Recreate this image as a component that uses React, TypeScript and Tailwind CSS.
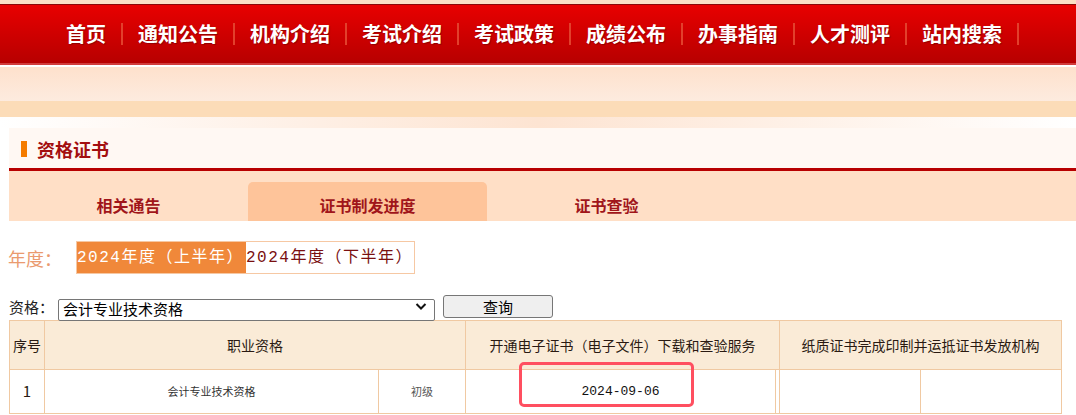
import React from 'react';

// Navigation items
const navItems = ['首页', '通知公告', '机构介绍', '考试介绍', '考试政策', '成绩公布', '办事指南', '人才测评', '站内搜索'];

const tabs = [
  { label: '相关通告', active: false },
  { label: '证书制发进度', active: true },
  { label: '证书查验', active: false },
];

const NavBar: React.FC = () => (
  <nav className="h-[61px] border-t border-[#8a0808] bg-gradient-to-b from-[#e80000] to-[#b70000] border-b-2 border-b-[#d23c3c] flex items-center pl-[66px]">
    {navItems.map((item) => (
      <div key={item} className="flex items-center">
        <span className="text-white text-[20px] font-bold leading-none [text-shadow:1px_1px_1px_rgba(110,0,0,0.6)]">{item}</span>
        <span className="ml-[15px] mr-[15px] w-[2px] h-[22px] bg-[#e2402c]" />
      </div>
    ))}
  </nav>
);

const App: React.FC = () => {
  return (
    <div className="relative w-[1076px] h-[415px] overflow-hidden bg-white font-['Noto_Sans_CJK_SC',sans-serif]">
      {/* Top strip + nav */}
      <div className="h-[4px] bg-[#fbdfc6]" />
      <NavBar />
      <div className="h-[2px] bg-white" />

      {/* Banner bands */}
      <div className="h-[34px] bg-gradient-to-b from-[#fee1cc] to-[#fdebdf]" />
      <div className="h-[16px] bg-[#fcdcb8]" />
      <div className="h-[11px] bg-gradient-to-r from-white via-[#fde4d2] to-white" />

      {/* Panel */}
      <div className="ml-[9px]">
        <div className="h-[39px] bg-[#fff8f3] border-b-[3px] border-[#b80000] box-content flex items-center pl-[12px] pt-[1px]">
          <span className="w-[6px] h-[16px] bg-[#f57c00]" />
          <span className="ml-[10px] text-[18px] font-bold text-[#a30f10] leading-none">资格证书</span>
        </div>

        <div className="h-[50px] bg-[#ffdfc6] flex items-end">
          {tabs.map((tab) => (
            <div
              key={tab.label}
              className={`w-[239px] h-[39px] flex items-end justify-center pb-[4px] rounded-t-[5px] ${tab.active ? 'bg-[#fec49a]' : ''}`}
            >
              <span className="text-[16px] leading-[24px] font-bold text-[#a0151a]">{tab.label}</span>
            </div>
          ))}
        </div>
      </div>

      {/* Year selector */}
      <div className="mt-[20px] flex items-center h-[33px]">
        <span className="w-[76px] shrink-0 pl-[8px] text-[18px] text-[#ea9a6f] leading-none whitespace-nowrap">年度：</span>
        <div className="flex border border-[#f6c8a3] font-['Liberation_Mono','Noto_Sans_CJK_SC',monospace] text-[16px] tracking-[1.5px]">
          <div className="w-[169px] h-[31px] bg-[#f0883a] text-white flex items-center whitespace-nowrap">2024年度（上半年）</div>
          <div className="w-[168px] h-[31px] bg-white text-[#7a1010] flex items-center whitespace-nowrap">2024年度（下半年）</div>
        </div>
      </div>

      {/* Qualification filter */}
      <div className="mt-[21px] flex items-center h-[23px]">
        <span className="w-[58px] shrink-0 pl-[9px] text-[15px] text-[#222] leading-none whitespace-nowrap">资格：</span>
        <div className="relative shrink-0 w-[377px] h-[22px]">
          <select className="appearance-none w-full h-full border border-[#767676] rounded-[2px] bg-white text-[15px] leading-[18px] pl-[4px] pb-[2px] text-black">
            <option>会计专业技术资格</option>
          </select>
          <svg className="absolute right-[8px] top-[6px] pointer-events-none" width="12" height="9" viewBox="0 0 12 9">
            <path d="M1.5 2 L6 6.5 L10.5 2" fill="none" stroke="#111" strokeWidth="2" />
          </svg>
        </div>
        <button className="ml-[8px] shrink-0 w-[110px] h-[23px] bg-[#efefef] border border-[#767676] rounded-[3px] text-[15px] leading-none text-black">查询</button>
      </div>

      {/* Result table */}
      <table className="mt-[2px] ml-[9px] w-[1052px] table-fixed border-collapse text-[#2a1a12]">
        <colgroup>
          <col className="w-[35px]" />
          <col className="w-[334px]" />
          <col className="w-[87px]" />
          <col className="w-[310px]" />
          <col className="w-[4px]" />
          <col className="w-[141px]" />
          <col className="w-[141px]" />
        </colgroup>
        <thead>
          <tr className="h-[49px] bg-[#faebd7] text-[14px]">
            <th className="border border-[#f0c9a2] font-normal">序号</th>
            <th colSpan={2} className="border border-[#f0c9a2] font-normal">职业资格</th>
            <th colSpan={2} className="border border-[#f0c9a2] font-normal whitespace-nowrap">开通电子证书（电子文件）下载和查验服务</th>
            <th colSpan={2} className="border border-[#f0c9a2] font-normal whitespace-nowrap">纸质证书完成印制并运抵证书发放机构</th>
          </tr>
        </thead>
        <tbody>
          <tr className="h-[44px] text-center">
            <td className="border border-[#f0c9a2] text-[15px]">1</td>
            <td className="border border-[#f0c9a2] text-[11px] text-[#333]">会计专业技术资格</td>
            <td className="border border-[#f0c9a2] text-[11px] text-[#555]">初级</td>
            <td className="border border-[#f0c9a2] text-[13px] font-['Liberation_Mono',monospace] text-[#111]">2024-09-06</td>
            <td className="border border-[#f0c9a2]" />
            <td className="border border-[#f0c9a2]" />
            <td className="border border-[#f0c9a2]" />
          </tr>
        </tbody>
      </table>

      {/* Highlight annotation */}
      <div className="absolute left-[519px] top-[362px] w-[175px] h-[45px] border-[3px] border-[#ff4f60] rounded-[5px] pointer-events-none" />
    </div>
  );
};

export default App;
